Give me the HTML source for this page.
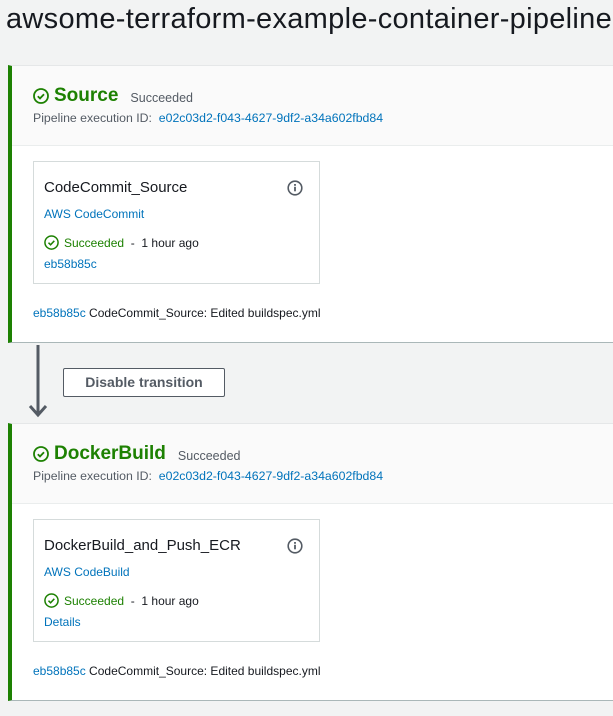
<!DOCTYPE html><html><head><style>
body{margin:0;width:613px;height:716px;background:#f2f3f3;font-family:"Liberation Sans",sans-serif;overflow:hidden;position:relative;color:#16191f}
.t{position:absolute;left:6px;top:3px;font-size:29px;letter-spacing:0.3px;color:#16191f;white-space:nowrap}
.stage{position:absolute;left:8px;width:605px;height:278px;background:#fff;border-left:4px solid #1d8102;border-bottom:1px solid #aab7b8;box-sizing:border-box;border-top:1px solid #e5e7e8}
.hd{height:79px;background:#fafafa;border-bottom:1px solid #eaeded;position:relative}
.nm{position:absolute;left:21px;top:19px;font-size:19px;font-weight:bold;color:#1d8102;display:flex;align-items:center}
.nm svg{margin-right:5px}
.st{font-size:12.5px;color:#545b64;font-weight:normal;margin-left:12px;margin-top:3px}
.pid{position:absolute;left:21px;top:45px;font-size:12.3px;color:#545b64}
a{color:#0073bb;text-decoration:none}
.card{position:absolute;left:21px;top:95px;width:287px;height:123px;border:1px solid #d5dbdb;box-sizing:border-box}
.cn{position:absolute;left:10px;top:17px;font-size:15px}
.info{position:absolute;left:253px;top:18px}
.pr{position:absolute;left:10px;top:45px;font-size:12px}
.ok{position:absolute;left:10px;top:73px;font-size:12px;color:#1d8102;display:flex;align-items:center}
.ok svg{margin-right:5px}
.ok span{color:#16191f}
.lk{position:absolute;left:10px;top:95px;font-size:12px}
.ft{position:absolute;left:21px;top:240px;font-size:12px}
.btn{position:absolute;left:63px;top:368px;width:162px;height:29px;border:1px solid #545b64;border-radius:2px;background:#fff;box-sizing:border-box;font-size:14px;font-weight:bold;color:#545b64;text-align:center;line-height:27px}
</style></head><body>
<div class="t">awsome-terraform-example-container-pipeline</div>

<div class="stage" style="top:65px">
<div class="hd"><div class="nm"><svg width="16" height="16" viewBox="0 0 16 16"><circle cx="8" cy="8" r="7" fill="none" stroke="#1d8102" stroke-width="1.8"/><path d="M4.8 8.2l2.2 2.2 4-4.2" fill="none" stroke="#1d8102" stroke-width="1.8"/></svg>Source<span class="st">Succeeded</span></div>
<div class="pid">Pipeline execution ID:&nbsp; <a>e02c03d2-f043-4627-9df2-a34a602fbd84</a></div></div>
<div class="card"><div class="cn">CodeCommit_Source</div>
<svg class="info" width="16" height="16" viewBox="0 0 16 16"><circle cx="8" cy="8" r="6.8" fill="none" stroke="#545b64" stroke-width="1.6"/><rect x="7.1" y="6.8" width="1.8" height="4.5" fill="#545b64"/><rect x="7.1" y="4" width="1.8" height="1.8" fill="#545b64"/></svg>
<div class="pr"><a>AWS CodeCommit</a></div>
<div class="ok"><svg width="15" height="15" viewBox="0 0 16 16"><circle cx="8" cy="8" r="7" fill="none" stroke="#1d8102" stroke-width="1.6"/><path d="M4.8 8.2l2.2 2.2 4-4.2" fill="none" stroke="#1d8102" stroke-width="1.6"/></svg>Succeeded&nbsp;<span>&nbsp;-&nbsp; 1 hour ago</span></div>
<div class="lk"><a>eb58b85c</a></div></div>
<div class="ft"><a>eb58b85c</a> CodeCommit_Source: Edited buildspec.yml</div>
</div>

<svg style="position:absolute;left:27px;top:345px" width="24" height="75" viewBox="0 0 24 75"><path d="M11 0v70M3 61l8 9 8-9" fill="none" stroke="#545b64" stroke-width="3"/></svg>
<div class="btn">Disable transition</div>

<div class="stage" style="top:423px">
<div class="hd"><div class="nm"><svg width="16" height="16" viewBox="0 0 16 16"><circle cx="8" cy="8" r="7" fill="none" stroke="#1d8102" stroke-width="1.8"/><path d="M4.8 8.2l2.2 2.2 4-4.2" fill="none" stroke="#1d8102" stroke-width="1.8"/></svg>DockerBuild<span class="st">Succeeded</span></div>
<div class="pid">Pipeline execution ID:&nbsp; <a>e02c03d2-f043-4627-9df2-a34a602fbd84</a></div></div>
<div class="card"><div class="cn">DockerBuild_and_Push_ECR</div>
<svg class="info" width="16" height="16" viewBox="0 0 16 16"><circle cx="8" cy="8" r="6.8" fill="none" stroke="#545b64" stroke-width="1.6"/><rect x="7.1" y="6.8" width="1.8" height="4.5" fill="#545b64"/><rect x="7.1" y="4" width="1.8" height="1.8" fill="#545b64"/></svg>
<div class="pr"><a>AWS CodeBuild</a></div>
<div class="ok"><svg width="15" height="15" viewBox="0 0 16 16"><circle cx="8" cy="8" r="7" fill="none" stroke="#1d8102" stroke-width="1.6"/><path d="M4.8 8.2l2.2 2.2 4-4.2" fill="none" stroke="#1d8102" stroke-width="1.6"/></svg>Succeeded&nbsp;<span>&nbsp;-&nbsp; 1 hour ago</span></div>
<div class="lk"><a>Details</a></div></div>
<div class="ft"><a>eb58b85c</a> CodeCommit_Source: Edited buildspec.yml</div>
</div>
</body></html>
